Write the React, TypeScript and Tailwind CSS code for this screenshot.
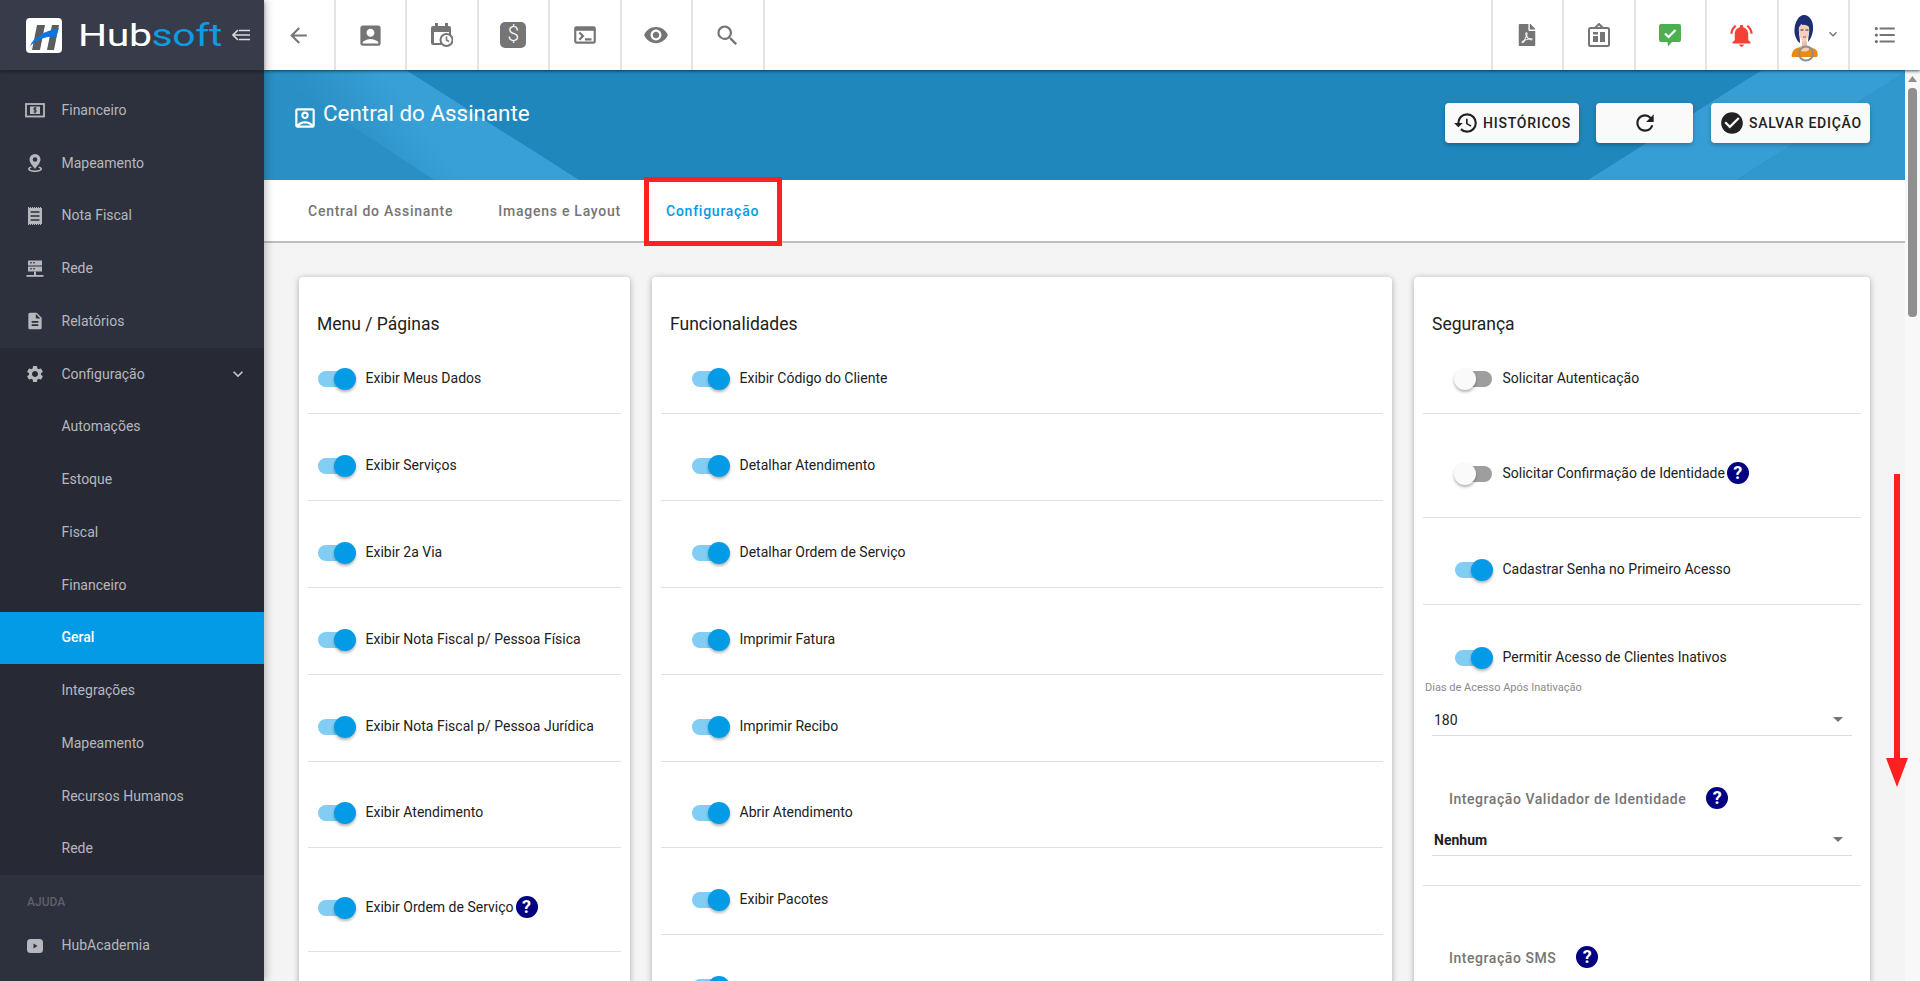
import React from "react";
import {
  MdArrowBack, MdAccountBox, MdTerminal, MdVisibility, MdSearch, MdNotificationsActive,
  MdExpandMore, MdHistory, MdRefresh, MdCheckCircle, MdOutlineAccountBox,
  MdDescription, MdSettings, MdFormatListBulleted,
} from "react-icons/md";
import { FaFilePdf } from "react-icons/fa";

type IconT = React.ComponentType<{ size?: number; className?: string }>;

const Help = () => (
  <span className="inline-flex h-[22px] w-[22px] shrink-0 items-center justify-center rounded-full bg-[#000080] text-[18px] font-bold leading-none text-white">?</span>
);

const Toggle = ({ on }: { on: boolean }) => (
  <span className="relative block h-[22px] w-[39px] shrink-0">
    <span className={`absolute left-[1px] top-[3px] h-[16px] w-[37px] rounded-full ${on ? "bg-[#81cdf4]" : "bg-[#9e9e9e]"}`} />
    <span
      className={`absolute top-0 h-[22px] w-[22px] rounded-full shadow-[0_2px_3px_rgba(0,0,0,0.3)] ${on ? "right-0 bg-[#039be5]" : "left-0 bg-[#fafafa]"}`}
    />
  </span>
);

type RowProps = { label: string; on?: boolean; help?: boolean; pad: string; h: string; pb: string };
const Row = ({ label, on = true, help, pad, h, pb }: RowProps) => (
  <div className={`mx-[9px] flex items-end border-b border-[#e0e0e0] ${pad} ${h} ${pb}`}>
    <div className="flex items-center">
      <Toggle on={on} />
      {label && <span className="ml-[9.500px] -mt-[2px] text-[14px] leading-[20px] text-[#212121]">{label}</span>}
      {help && <span className="ml-[2px]"><Help /></span>}
    </div>
  </div>
);

const CardTitle = ({ children }: { children: React.ReactNode }) => (
  <h2 className="ml-[18px] pt-[33px] text-[17.5px] font-normal leading-[28px] text-[#212121]">{children}</h2>
);

const Caret = () => (
  <svg width="10" height="5" viewBox="0 0 10 5" className="mb-[8px] shrink-0"><path d="M0 0h10L5 5z" fill="#757575" /></svg>
);

const Select = ({ value, bold, h }: { value: string; bold?: boolean; h: string }) => (
  <div className={`mx-[18px] flex items-end justify-between border-b border-[#dcdcdc] pb-[5px] pl-[2px] pr-[9px] ${h}`}>
    <span className={`text-[14px] leading-[20px] text-[#212121] ${bold ? "font-bold" : ""}`}>{value}</span>
    <Caret />
  </div>
);

const PinIcon: IconT = ({ size = 20, className }) => (
  <svg width={size} height={size} viewBox="0 0 20 20" className={className} fill="currentColor">
    <path fillRule="evenodd" d="M10 1a5.500 5.500 0 0 1 5.500 5.500C15.500 10 12 13 10 16 8 13 4.500 10 4.500 6.500A5.500 5.500 0 0 1 10 1zm0 3.200a2.300 2.300 0 1 0 0 4.600 2.300 2.300 0 0 0 0-4.600z" />
    <path d="M6 13.500C3.500 14.200 3 15.200 3 16c0 1.700 3.500 3 7 3s7-1.300 7-3c0-.8-.5-1.800-3-2.500l-.6 1.300c1.500.4 2 .9 2 1.200 0 .6-2.200 1.500-5.400 1.500S4.600 16.600 4.600 16c0-.3.500-.8 2-1.200z" />
  </svg>
);
const AtmIcon: IconT = ({ size = 20, className }) => (
  <svg width={size} height={size} viewBox="0 0 20 20" className={className}>
    <rect x="1" y="4" width="18" height="12.500" fill="none" stroke="currentColor" strokeWidth="1.800" />
    <rect x="5" y="6.500" width="10" height="7.500" fill="currentColor" />
    <path d="M11.500 8H9v1.800h2V12H8.500M10 7v6.500" fill="none" stroke="#2d303d" strokeWidth="1" />
  </svg>
);
const ReceiptIcon: IconT = ({ size = 20, className }) => (
  <svg width={size} height={size} viewBox="0 0 20 20" className={className}>
    <rect x="3" y="2" width="14" height="16" fill="currentColor" />
    <path d="M3 1.500h14M3 18.500h14" stroke="currentColor" strokeDasharray="1 1" />
    <path d="M5.500 6h9M5.500 10h9M5.500 14h9" stroke="#2d303d" strokeWidth="1.500" />
  </svg>
);
const NetIcon: IconT = ({ size = 20, className }) => (
  <svg width={size} height={size} viewBox="0 0 20 20" className={className} fill="currentColor">
    <rect x="3" y="1.500" width="14" height="5" />
    <rect x="3" y="7.500" width="14" height="5" />
    <rect x="9" y="12.500" width="2" height="4" />
    <rect x="1.500" y="16" width="17" height="1.800" />
    <rect x="5" y="3.300" width="2" height="1" fill="#2d303d" />
    <rect x="5" y="9.300" width="2" height="1" fill="#2d303d" />
    <rect x="8" y="3.300" width="2" height="1" fill="#2d303d" />
    <rect x="8" y="9.300" width="2" height="1" fill="#2d303d" />
  </svg>
);
const PlayIcon: IconT = ({ size = 20, className }) => (
  <svg width={size} height={size} viewBox="0 0 20 20" className={className}>
    <rect x="2" y="3" width="16" height="14" rx="3.500" fill="currentColor" />
    <path d="M8.500 7.500l4 2.500-4 2.500z" fill="#2d303d" />
  </svg>
);

const menuItems: [string, boolean?][] = [
  ["Exibir Meus Dados"], ["Exibir Serviços"], ["Exibir 2a Via"], ["Exibir Nota Fiscal p/ Pessoa Física"],
  ["Exibir Nota Fiscal p/ Pessoa Jurídica"], ["Exibir Atendimento"], ["Exibir Ordem de Serviço", true],
];
const funcItems = [
  "Exibir Código do Cliente", "Detalhar Atendimento", "Detalhar Ordem de Serviço", "Imprimir Fatura", "Imprimir Recibo",
  "Abrir Atendimento", "Exibir Pacotes", "",
];

const sideTop: [IconT, string][] = [
  [AtmIcon, "Financeiro"], [PinIcon, "Mapeamento"], [ReceiptIcon, "Nota Fiscal"], [NetIcon, "Rede"], [MdDescription, "Relatórios"],
];
const subItems = ["Automações", "Estoque", "Fiscal", "Financeiro", "Geral", "Integrações", "Mapeamento", "Recursos Humanos", "Rede"];

const SideItem = ({ icon: Icon, label, chevron }: { icon: IconT; label: string; chevron?: boolean }) => (
  <div className="flex h-[52.75px] items-center text-[14px] text-[#b6b8bd]">
    <span className="flex w-[61.5px] pl-[25px]"><Icon size={20} className="text-[#b6b8bd]" /></span>
    <span>{label}</span>
    {chevron && <MdExpandMore size={20} className="ml-auto mr-[16px] text-[#c4c6ca]" />}
  </div>
);

const Cell = ({ children }: { children?: React.ReactNode }) => (
  <div className="flex h-[70px] w-[71.5px] shrink-0 items-center justify-center border-r-2 border-[#e4e4e4] text-[#757575]">{children}</div>
);

const CalendarClock = () => (
  <svg width="22" height="24" viewBox="0 0 22 24">
    <path d="M2 3h2V0h3v3h7V0h3v3h1a2 2 0 0 1 2 2v7h-2V9H3v11h7v2H2a2 2 0 0 1-2-2V5a2 2 0 0 1 2-2z" fill="#757575" />
    <circle cx="15.500" cy="17" r="6" fill="#fff" stroke="#757575" strokeWidth="2" />
    <path d="M15.500 13.500V17l2.600 1.600" fill="none" stroke="#757575" strokeWidth="1.600" />
  </svg>
);

const Board = () => (
  <svg width="22" height="24" viewBox="0 0 22 24" fill="none">
    <path d="M7 5l4-4 4 4" stroke="#757575" strokeWidth="2" />
    <rect x="1" y="5" width="20" height="18" rx="1.500" stroke="#757575" strokeWidth="2" />
    <rect x="5" y="13" width="5" height="6" fill="#757575" />
    <rect x="5" y="9" width="5" height="2.500" fill="#757575" />
    <rect x="12" y="9" width="5" height="10" fill="#757575" />
  </svg>
);

const ChatCheck = () => (
  <svg width="22" height="23" viewBox="0 0 22 23">
    <path d="M2 0h18a2 2 0 0 1 2 2v14a2 2 0 0 1-2 2h-7l-4 4.500-.5-4.500H2a2 2 0 0 1-2-2V2a2 2 0 0 1 2-2z" fill="#4caf50" />
    <path d="M6 9.500l3.500 3.500L16.500 6" fill="none" stroke="#fff" strokeWidth="2.200" />
  </svg>
);

const Avatar = () => (
  <svg width="30" height="47" viewBox="0 0 30 47">
    <path d="M4 36c2-3 6-4 8-4h7c2 0 7 1 9 4 1 2 1 5 0 6H3c-1-1 0-4 1-6z" fill="#e98b11" />
    <path d="M11 31h9v4c-2 2-7 2-9 0z" fill="#f2cdb6" />
    <path d="M13 26h5v6h-5z" fill="#eebfa4" />
    <path d="M6 20C4 10 9 0 15 0s10 7 9 15c-.5 5-3 10-5 12l1-12-8-6-2 8c0 3 1 7 1 11-2-1-4-4-5-8z" fill="#1c2f73" />
    <path d="M10 12c2-3 7-3 10 0 1 6-1 13-5 15-3-1-6-8-5-15z" fill="#f3d0bb" />
    <path d="M11.500 15h3M16.500 15h3" stroke="#3a2a26" strokeWidth="1" />
    <path d="M14 22h3" stroke="#c8645a" strokeWidth="1.200" />
    <circle cx="17" cy="38.500" r="7" fill="none" stroke="#8f8f8f" strokeWidth="2" />
  </svg>
);

const Logo = () => (
  <svg width="36" height="35" viewBox="0 0 36 35" className="shrink-0">
    <rect width="36" height="35" rx="4" fill="#fff" />
    <path d="M6 32L11 7h8l-5 25z" fill="#5c5c5c" />
    <path d="M21 32l5-25h7l-5 25z" fill="#5c5c5c" />
    <path d="M4 28C8 19 16 14 33 10l-3 9c-8-1-17 1-26 9z" fill="#0d74e0" />
  </svg>
);

const Collapse = () => (
  <svg width="18" height="12" viewBox="0 0 18 12" fill="none" stroke="#d9dadd" strokeWidth="1.600">
    <path d="M6 1L1 6l5 5" />
    <path d="M1 6h17M7 1.500h11M7 10.500h11" />
  </svg>
);

export default function App() {
  return (
    <div className="relative flex h-[981px] w-[1920px] overflow-hidden bg-[#f4f4f4] font-['Roboto',sans-serif]">
      {/* Sidebar */}
      <aside className="relative z-20 flex h-full w-[264px] shrink-0 flex-col bg-[#2d303d] shadow-[2px_0_8px_rgba(0,0,0,0.25)]">
        <div className="flex h-[70px] shrink-0 items-center bg-[#383b49] pl-[26px] shadow-[0_2px_3px_rgba(0,0,0,0.3)]">
          <Logo />
          <span className="ml-[16px] w-[144px] origin-left scale-x-[1.32] whitespace-nowrap text-[31px] font-normal leading-none tracking-[-0.3px] text-white">
            Hub<span className="text-[#0f9ae2]">soft</span>
          </span>
          <span className="ml-[10px]"><Collapse /></span>
        </div>
        <div className="pt-[14px]">
          {sideTop.map(([I, l]) => <SideItem key={l} icon={I} label={l} />)}
        </div>
        <div className="bg-[#272a35]">
          <SideItem icon={MdSettings} label="Configuração" chevron />
          {subItems.map((s, i) => (
            <div key={i} className={`flex h-[52.75px] items-center pl-[61.5px] text-[14px] ${s === "Geral" ? "bg-[#039be5] font-medium text-white" : "text-[#b6b8bd]"}`}>{s}</div>
          ))}
        </div>
        <div className="flex h-[44px] items-end pb-[8px] pl-[27px] text-[12px] font-medium text-[#5e616c]">AJUDA</div>
        <SideItem icon={PlayIcon} label="HubAcademia" />
      </aside>

      {/* Main */}
      <div className="flex min-w-0 flex-1 flex-col">
        <header className="relative z-10 flex h-[70px] shrink-0 items-center bg-white shadow-[0_1px_3px_rgba(0,40,70,0.8)]">
          <Cell><MdArrowBack size={25} /></Cell>
          <Cell><MdAccountBox size={27} /></Cell>
          <Cell><CalendarClock /></Cell>
          <Cell><span className="flex h-[26px] w-[26px] items-center justify-center rounded-[5px] bg-[#757575] text-[21px] font-light text-white">$</span></Cell>
          <Cell><MdTerminal size={26} /></Cell>
          <Cell><MdVisibility size={26} /></Cell>
          <Cell><MdSearch size={27} /></Cell>
          <div className="flex-1" />
          <div className="h-[70px] w-[2px] bg-[#e4e4e4]" />
          <Cell><FaFilePdf size={22} /></Cell>
          <Cell><Board /></Cell>
          <Cell><ChatCheck /></Cell>
          <Cell><MdNotificationsActive size={27} className="text-[#f44336]" /></Cell>
          <Cell>
            <span className="flex items-start pl-[3px] pt-[7px]"><Avatar /><MdExpandMore size={16} className="ml-[6px] mt-[11px] text-[#757575]" /></span>
          </Cell>
          <div className="flex h-[70px] w-[70px] shrink-0 items-center justify-center text-[#757575]"><MdFormatListBulleted size={26} /></div>
        </header>

        <div className="flex min-h-0 flex-1">
          <main className="relative min-w-0 flex-1 overflow-hidden">
            <section className="relative flex h-[110px] items-start justify-between overflow-hidden bg-[#1f87bc] pl-[28px] pr-[35px]">
              <svg className="absolute inset-0 h-full w-full" viewBox="0 0 1641 110" preserveAspectRatio="none">
                <defs>
                  <linearGradient id="b1" gradientUnits="userSpaceOnUse" x1="90" y1="85" x2="190" y2="15">
                    <stop offset="0" stopColor="#2a90c6" />
                    <stop offset="0.6" stopColor="#39a0d7" />
                  </linearGradient>
                </defs>
                <path d="M0 0h2l168 110H0z" fill="#2a8fc4" />
                <path d="M2 0h140l173 110H170z" fill="url(#b1)" />
                <path d="M1324 110L1498 0h143v2L1473 110z" fill="#379ed5" />
                <path d="M1473 110L1641 2v108z" fill="#3198ce" />
              </svg>
              <div className="relative mt-[27px] flex items-start text-white">
                <MdOutlineAccountBox size={26} className="mt-[8px]" />
                <h1 className="ml-[5px] text-[22.4px] font-normal leading-[32px]">Central do Assinante</h1>
              </div>
              <div className="relative mt-[33px] flex gap-[17px] text-[#212121]">
                <button className="flex h-[40px] w-[134px] items-center justify-center gap-[4px] rounded-[4px] bg-[#fafafa] text-[14px] font-medium tracking-[0.75px] shadow-[0_2px_4px_rgba(0,0,0,0.25)]">
                  <MdHistory size={26} /> HISTÓRICOS
                </button>
                <button className="mr-[1px] flex h-[40px] w-[97px] items-center justify-center rounded-[4px] bg-[#fafafa] shadow-[0_2px_4px_rgba(0,0,0,0.25)]">
                  <MdRefresh size={26} />
                </button>
                <button className="flex h-[40px] w-[159px] items-center justify-center gap-[4px] rounded-[4px] bg-[#fafafa] text-[14px] font-medium tracking-[0.75px] shadow-[0_2px_4px_rgba(0,0,0,0.25)]">
                  <MdCheckCircle size={26} /> SALVAR EDIÇÃO
                </button>
              </div>
            </section>

            <nav className="flex h-[63px] items-center gap-[45px] border-b-2 border-[#bdbdbd] bg-white pl-[44px] pt-[2px] text-[14px] font-medium tracking-[0.75px] text-[#757575]">
              <span>Central do Assinante</span>
              <span>Imagens e Layout</span>
              <span className="relative text-[#039be5]">
                Configuração
                <span className="absolute -left-[22px] -right-[23px] -top-[24px] -bottom-[24px] border-[5px] border-[#ff2020]" />
              </span>
            </nav>

            <div className="flex items-start gap-x-[22px] pl-[35px] pt-[34px]">
              <article className="w-[331px] shrink-0 rounded-[4px] bg-white pb-[40px] shadow-[0_1px_6px_rgba(0,0,0,0.3)]">
                <CardTitle>Menu / Páginas</CardTitle>
                {menuItems.map(([l, help], i) => (
                  <Row key={l} label={l} help={help} pad="pl-[9px]" h={i === 0 ? "h-[76.4px]" : help ? "h-[104px]" : "h-[86.8px]"} pb={help ? "pb-[31px]" : "pb-[23px]"} />
                ))}
              </article>

              <article className="w-[740px] shrink-0 rounded-[4px] bg-white pb-[40px] shadow-[0_1px_6px_rgba(0,0,0,0.3)]">
                <CardTitle>Funcionalidades</CardTitle>
                {funcItems.map((l, i) => (
                  <Row key={i} label={l} pad="pl-[30px]" h={i === 0 ? "h-[76.4px]" : "h-[86.8px]"} pb="pb-[23px]" />
                ))}
              </article>

              <article className="w-[456px] shrink-0 rounded-[4px] bg-white pb-[40px] shadow-[0_1px_6px_rgba(0,0,0,0.3)]">
                <CardTitle>Segurança</CardTitle>
                <Row label="Solicitar Autenticação" on={false} pad="pl-[31px]" h="h-[76.4px]" pb="pb-[23px]" />
                <Row label="Solicitar Confirmação de Identidade" on={false} help pad="pl-[31px]" h="h-[104px]" pb="pb-[31px]" />
                <Row label="Cadastrar Senha no Primeiro Acesso" pad="pl-[31px]" h="h-[87px]" pb="pb-[23px]" />
                <div className="mx-[9px] flex h-[64px] items-end pl-[31px]">
                  <div className="flex items-center">
                    <Toggle on />
                    <span className="ml-[9.500px] -mt-[2px] text-[14px] leading-[20px] text-[#212121]">Permitir Acesso de Clientes Inativos</span>
                  </div>
                </div>
                <div className="ml-[11px] mt-[12px] text-[11px] leading-[14px] text-[#8a8a8a]">Dias de Acesso Após Inativação</div>
                <Select value="180" h="h-[41px]" />
                <div className="ml-[35px] mt-[50px] flex h-[26px] items-center">
                  <span className="text-[14px] font-medium leading-[20px] tracking-[0.55px] text-[#757575]">Integração Validador de Identidade</span>
                  <span className="ml-[20px]"><Help /></span>
                </div>
                <Select value="Nenhum" bold h="h-[44px]" />
                <div className="mx-[9px] mt-[29px] border-b border-[#e0e0e0]" />
                <div className="ml-[35px] mt-[59px] flex h-[26px] items-center">
                  <span className="text-[14px] font-medium leading-[20px] tracking-[0.55px] text-[#757575]">Integração SMS</span>
                  <span className="ml-[20px]"><Help /></span>
                </div>
              </article>
            </div>
          </main>

          <div className="relative flex w-[15px] shrink-0 flex-col items-center bg-[#f8f8f8]">
            <svg width="9" height="6" viewBox="0 0 9 6" className="mt-[6px]"><path d="M0 6L4.500 0 9 6z" fill="#8f8f8f" /></svg>
            <div className="mt-[6px] h-[229px] w-[9px] rounded-[4px] bg-[#8f8f8f]" />
          </div>
        </div>
      </div>

      {/* Red annotation arrow */}
      <svg className="absolute left-[1886px] top-[474px] z-30" width="22" height="314" viewBox="0 0 22 314">
        <path d="M8 0h6v284h8l-11 29L0 284h8z" fill="#ff2020" />
      </svg>
    </div>
  );
}
